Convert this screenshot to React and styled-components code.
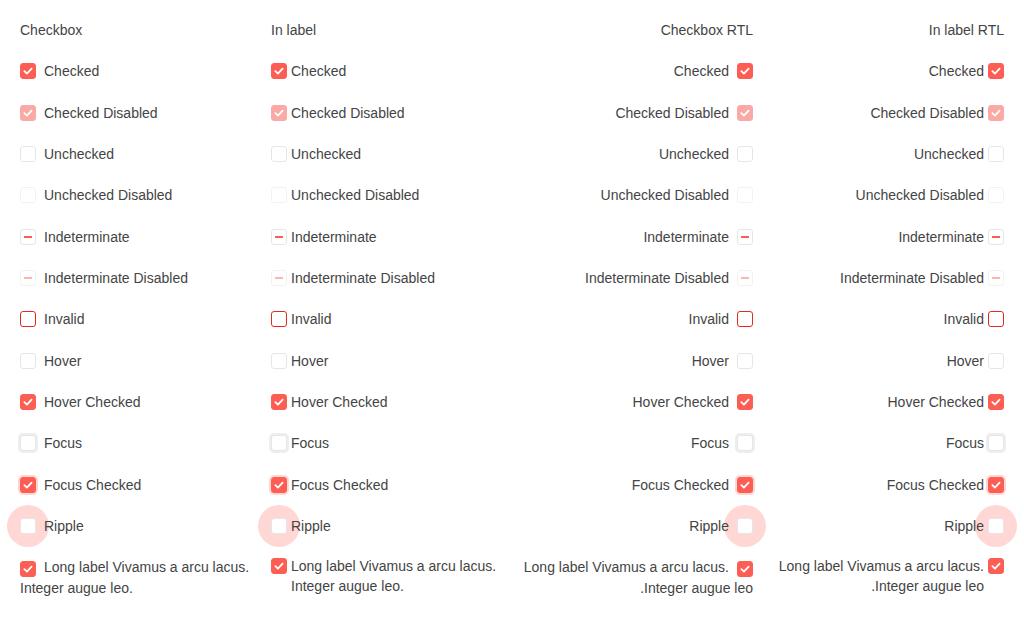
import React from "react";
import styled, { createGlobalStyle, css } from "styled-components";

const GlobalStyle = createGlobalStyle`
  html {
    background: #fff;
  }
  html, body {
    margin: 0;
    padding: 0;
  }
  body {
    font-family: "Liberation Sans", Arial, sans-serif;
    font-size: 14px;
    color: #444;
  }
`;

const RED = "#fd5e53";
const RED_LIGHT = "#f9aaa4";

const rows = [
  { label: "Checked", checked: true },
  { label: "Checked Disabled", checked: true, disabled: true },
  { label: "Unchecked" },
  { label: "Unchecked Disabled", disabled: true },
  { label: "Indeterminate", indeterminate: true },
  { label: "Indeterminate Disabled", indeterminate: true, disabled: true },
  { label: "Invalid", invalid: true },
  { label: "Hover" },
  { label: "Hover Checked", checked: true },
  { label: "Focus", focus: true },
  { label: "Focus Checked", checked: true, focus: true },
  { label: "Ripple", ripple: true },
];

const LONG = "Long label Vivamus a arcu lacus. Integer augue leo.";

const columns = [
  { title: "Checkbox", inLabel: false, rtl: false },
  { title: "In label", inLabel: true, rtl: false },
  { title: "Checkbox RTL", inLabel: false, rtl: true },
  { title: "In label RTL", inLabel: true, rtl: true },
];

const Page = styled.div`
  display: grid;
  grid-template-columns: repeat(4, 231px);
  column-gap: 20px;
  padding: 20px;
`;

const Column = styled.div`
  display: flex;
  flex-direction: column;
  gap: 21.33px;
  direction: ${(p) => (p.$rtl ? "rtl" : "ltr")};
`;

const Title = styled.div`
  height: 20px;
  line-height: 20px;
`;

const Row = styled.label`
  display: flex;
  align-items: center;
  gap: ${(p) => (p.$inLabel ? "4px" : "8px")};
  height: 20px;
  line-height: 20px;
`;

const LongRow = styled.label`
  display: block;
  line-height: 21px;
`;

const LongInLabel = styled.label`
  display: flex;
  align-items: flex-start;
  gap: 4px;
  line-height: 20px;
  margin-top: -1px;
`;

const Box = styled.span`
  position: relative;
  box-sizing: border-box;
  display: inline-flex;
  align-items: center;
  justify-content: center;
  flex: none;
  width: 16px;
  height: 16px;
  border-radius: 3px;
  border: 1px solid ${(p) => (p.$disabled ? "#f2f2f2" : "#e6e6e6")};
  background: #fff;

  ${(p) =>
    p.$checked &&
    css`
      border-color: ${p.$disabled ? RED_LIGHT : RED};
      background: ${p.$disabled ? RED_LIGHT : RED};
    `}

  ${(p) =>
    p.$invalid &&
    css`
      border-color: #e5291d;
    `}

  ${(p) =>
    p.$focus &&
    css`
      box-shadow: 0 0 0 2px ${p.$checked ? "#ffd6d2" : "#eeeeee"};
    `}

  ${(p) =>
    p.$ripple &&
    css`
      &::before {
        content: "";
        position: absolute;
        left: 50%;
        top: 50%;
        width: 42px;
        height: 42px;
        margin: -21px 0 0 -21px;
        border-radius: 50%;
        background: #ffd7d4;
        z-index: -1;
      }
    `}
`;

const InlineBox = styled(Box)`
  vertical-align: -3px;
  margin-inline-end: 8px;
`;

const LongBox = styled(Box)`
  margin-top: 2px;
`;

const Dash = styled.span`
  width: 8px;
  height: 2px;
  background: ${(p) => (p.$disabled ? "#fbb4af" : RED)};
`;

const Text = styled.span`
  white-space: nowrap;
`;

const Check = () => (
  <svg width="12" height="12" viewBox="0 0 12 12" fill="none">
    <path
      d="M2.4 6.2 L4.9 8.6 L9.6 3.6"
      stroke="#fff"
      strokeWidth="1.8"
      strokeLinecap="round"
      strokeLinejoin="round"
    />
  </svg>
);

const Checkbox = ({ as: Comp = Box, ...r }) => (
  <Comp
    $checked={r.checked}
    $disabled={r.disabled}
    $invalid={r.invalid}
    $focus={r.focus}
    $ripple={r.ripple}
  >
    {r.checked && <Check />}
    {r.indeterminate && <Dash $disabled={r.disabled} />}
  </Comp>
);

const App = () => (
  <>
    <GlobalStyle />
    <Page>
      {columns.map((col) => (
        <Column key={col.title} $rtl={col.rtl}>
          <Title>{col.title}</Title>
          {rows.map((r) => (
            <Row key={r.label} $inLabel={col.inLabel}>
              <Checkbox {...r} />
              <Text>{r.label}</Text>
            </Row>
          ))}
          {col.inLabel ? (
            <LongInLabel>
              <Checkbox as={LongBox} checked />
              <span>{LONG}</span>
            </LongInLabel>
          ) : (
            <LongRow>
              <Checkbox as={InlineBox} checked />
              {LONG}
            </LongRow>
          )}
        </Column>
      ))}
    </Page>
  </>
);

export default App;
